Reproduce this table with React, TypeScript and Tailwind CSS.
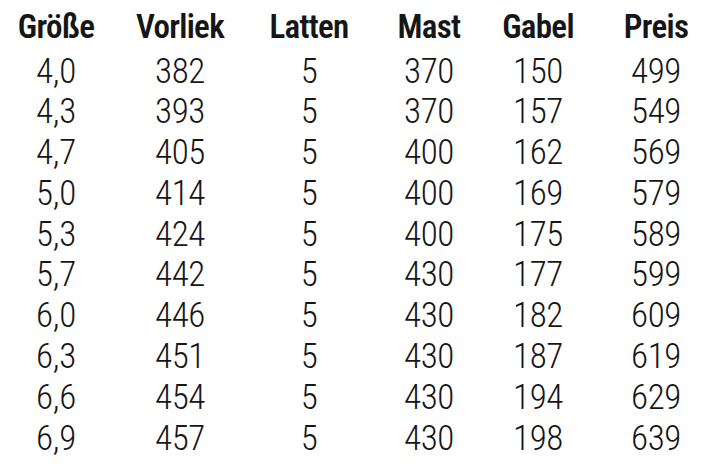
const headers = ["Größe", "Vorliek", "Latten", "Mast", "Gabel", "Preis"];

const rows: string[][] = [
  ["4,0", "382", "5", "370", "150", "499"],
  ["4,3", "393", "5", "370", "157", "549"],
  ["4,7", "405", "5", "400", "162", "569"],
  ["5,0", "414", "5", "400", "169", "579"],
  ["5,3", "424", "5", "400", "175", "589"],
  ["5,7", "442", "5", "430", "177", "599"],
  ["6,0", "446", "5", "430", "182", "609"],
  ["6,3", "451", "5", "430", "187", "619"],
  ["6,6", "454", "5", "430", "194", "629"],
  ["6,9", "457", "5", "430", "198", "639"],
];

const cellPad = ["", "", "", "", "", "pl-[12px]"];

export default function App() {
  return (
    <div className="w-[712px] h-[468px] overflow-hidden bg-white text-[#161616] font-['Roboto',sans-serif] [font-stretch:75%] pt-[6px]">
      <div className="grid grid-cols-[112px_136px_122px_118px_100px_124px]">
        {headers.map((h, i) => (
          <div
            key={h}
            className={`text-center text-[33px] leading-[41px] font-semibold tracking-[-0.7px] mb-[4.5px] ${cellPad[i]}`}
          >
            {h}
          </div>
        ))}
        {rows.map((r, ri) =>
          r.map((v, ci) => (
            <div
              key={`${ri}-${ci}`}
              className={`text-center text-[35px] leading-[40.8px] font-light tracking-[-0.3px] ${cellPad[ci]}`}
            >
              {v}
            </div>
          ))
        )}
      </div>
    </div>
  );
}
